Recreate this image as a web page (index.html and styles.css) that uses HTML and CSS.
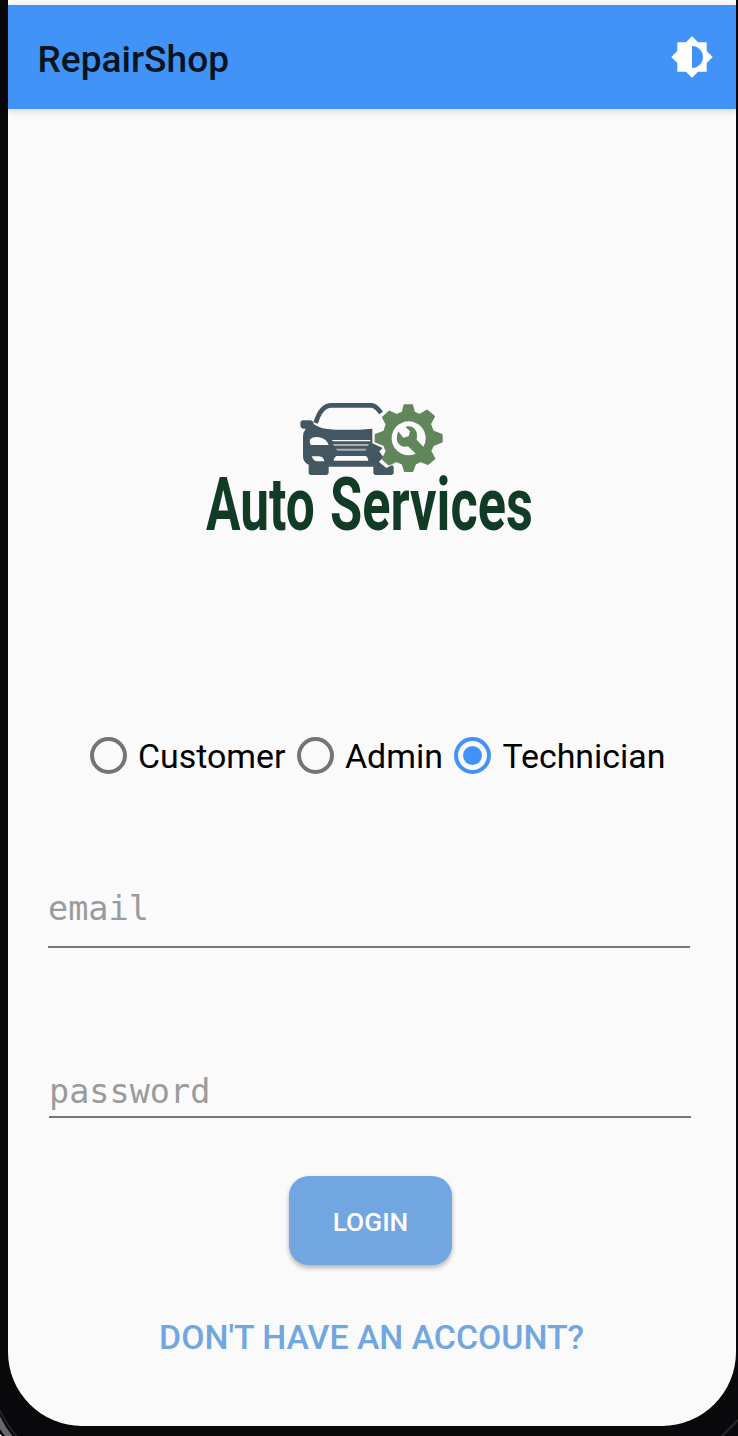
FILE: index.html
```html
<!DOCTYPE html>
<html lang="en">
<head>
<meta charset="utf-8">
<title>RepairShop</title>
<link rel="stylesheet" href="styles.css">
</head>
<body>
<div class="phone">
  <svg class="bezel" viewBox="0 0 738 1436">
    <path d="M0 1434L2 1436H0z" fill="#fff"/>
    <path d="M-3 1417Q3 1430 12 1440" fill="none" stroke="#66686b" stroke-width="6"/>
    <path d="M-2 1407Q6 1424 18 1438" fill="none" stroke="#242427" stroke-width="2"/>
    <path d="M738 1420L720 1438" fill="none" stroke="#29292b" stroke-width="2"/>
  </svg>
  <main class="screen">
    <header class="bar">
      <h1 class="title">RepairShop</h1>
      <svg class="theme" viewBox="0 0 24 24"><path fill="#fff" d="M20 15.31L23.31 12 20 8.69V4h-4.69L12 .69 8.69 4H4v4.69L.69 12 4 15.31V20h4.69L12 23.31 15.31 20H20v-4.69zM12 18V6c3.31 0 6 2.69 6 6s-2.69 6-6 6z"/></svg>
    </header>
    <svg class="logo" viewBox="200 395 340 145">
      <g transform="translate(290 395) scale(.33333)">
        <path d="M77 84Q93 31 124 31H244Q258 31 273 54" fill="none" stroke="#455663" stroke-width="14"/>
        <path fill="#455663" d="M40 76H60Q70 77 71 87Q84 97 106 101Q165 108 247 101V145L278 159L268 169Q275 181 280 185L267 201L289 219L307 210L311 216V232Q311 240 303 240H258Q250 240 250 232V215H116V232Q116 240 108 240H64Q56 240 56 232V209Q39 203 39 184V125Q39 112 47 101H40Q31 100 31 91V85Q31 77 40 76z"/>
        <path fill="#fafafa" d="M60 133Q70 124 87 127Q111 132 116 150H62Q57 144 60 133zM65 184H88Q101 185 103 199H80Q70 198 65 184zM140 183H228Q234 186 235 197H131Q132 186 140 183zM127 135H241V139H127z"/>
        <path fill="#a6b0b5" d="M128 147H237L234 153H133zM137 161H230L226 167H143z"/>
        <path fill="#62865b" stroke="#62865b" stroke-width="4" stroke-linejoin="round" d="M343 30H367L373 52L389 59L411 46L433 64L421 87L429 108L456 119V141L430 151L422 168L434 191L414 208L391 199L376 207L368 229H344L337 207L319 199L297 210L277 192L289 169L282 151L256 141V119L282 109L289 88L278 67L298 49L320 59L337 52z"/>
        <circle cx="356" cy="130" r="51" fill="#fafafa"/>
        <path fill="#62865b" d="M346 95Q371 90 380 112Q382 121 380 134L404 160Q395 174 382 181L354 154Q332 159 322 140Q318 125 325 109L340 128L356 124L360 109z"/>
      </g>
      <g class="brand">
        <text transform="translate(206 530) scale(.74 1)" textLength="147" lengthAdjust="spacingAndGlyphs">Auto</text>
        <text transform="translate(330 530) scale(.74 1)" textLength="274" lengthAdjust="spacingAndGlyphs">Services</text>
      </g>
    </svg>
    <div class="roles">
      <label class="role"><span class="dot"></span><span class="name">Customer</span></label>
      <label class="role"><span class="dot"></span><span class="name">Admin</span></label>
      <label class="role"><span class="dot on"></span><span class="name">Technician</span></label>
    </div>
    <div class="field email">email</div>
    <div class="field password">password</div>
    <button class="login">LOGIN</button>
    <a class="signup">DON'T HAVE AN ACCOUNT?</a>
  </main>
</div>
</body>
</html>
```
FILE: styles.css
```css
* { box-sizing: border-box; }
body { margin: 0; font-family: Roboto, sans-serif; background: #09080a; }
.phone { position: relative; width: 738px; height: 1436px; padding: 0 2px 10px 8px; overflow: hidden; background: #09080a; }
.bezel { position: absolute; left: 0; top: 0; width: 738px; height: 1436px; }
.screen { position: relative; display: flex; flex-direction: column; align-items: center; height: 1426px; padding-top: 5px; background: #fafafa; border-radius: 0 0 74px 74px; }
.bar { display: flex; align-items: center; justify-content: space-between; width: 100%; height: 104px; padding: 0 22.5px 0 29.5px; background: #4193f7; box-shadow: 0 2px 7px rgba(0,0,0,.16); }
.title { margin: 6px 0 0; font-size: 37.1px; font-weight: 500; line-height: 44px; color: #07151f; }
.theme { width: 44px; height: 44px; }
.logo { width: 340px; height: 145px; margin: 286px 4px 0 0; }
.brand { font-family: Roboto, sans-serif; font-size: 75px; font-weight: 700; fill: #123b25; }
.roles { display: flex; align-self: flex-start; gap: 11.5px; height: 40px; margin: 195px 0 0 82px; }
.role { display: flex; align-items: center; gap: 11px; font-size: 33.9px; line-height: 40px; color: #000; white-space: nowrap; }
.name { padding-top: 4px; }
.dot { display: flex; align-items: center; justify-content: center; width: 37px; height: 37px; border: 4px solid #757575; border-radius: 50%; }
.on { border-color: #4193f7; }
.on::after { content: ""; width: 19px; height: 19px; border-radius: 50%; background: #4193f7; }
.field { align-self: flex-start; width: 642px; border-bottom: 2px solid #777; font: 33.5px/40px "DejaVu Sans Mono", monospace; color: #9b9b9b; }
.email { height: 59px; margin: 114px 0 0 40px; }
.password { height: 48px; margin: 122px 0 0 41px; padding-top: 2px; }
.login { width: 163px; height: 89px; margin: 58px 3px 0 0; padding: 2px 0 0; border: 0; border-radius: 20px; background: #72a6e0; box-shadow: 0 3px 5px rgba(0,0,0,.28); color: #fff; font: 500 26.3px Roboto, sans-serif; }
.signup { margin: 53px 1px 0 0; font-size: 33.8px; font-weight: 500; line-height: 40px; color: #72a6e0; white-space: nowrap; }
```
